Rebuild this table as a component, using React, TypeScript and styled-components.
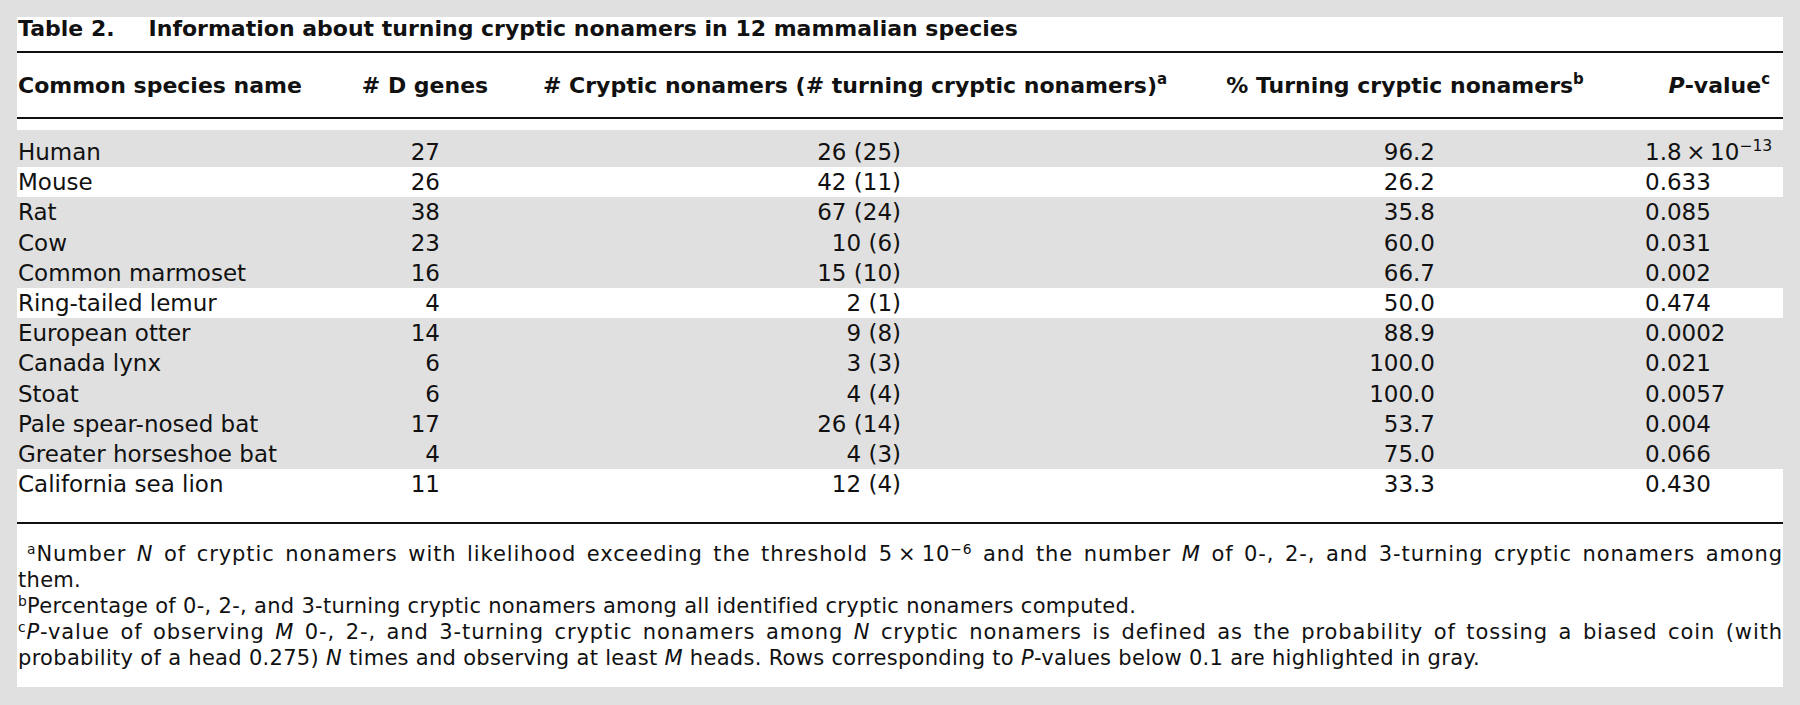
import styled, { createGlobalStyle } from 'styled-components';

const GlobalStyle = createGlobalStyle`
  html, body {
    margin: 0;
    padding: 0;
    background: #e0e0e0;
  }
  body {
    font-family: 'DejaVu Sans', 'Open Sans', sans-serif;
    color: #111;
  }
`;

const Page = styled.div`
  padding: 17px 17px 20px 17px;
`;

const Sheet = styled.div`
  width: 1766px;
  background: #fff;
  padding-bottom: 16px;
`;

const Title = styled.h1`
  margin: 0;
  padding-left: 1px;
  font-size: 22px;
  line-height: 24px;
  font-weight: bold;
  white-space: nowrap;
`;

const TitleLabel = styled.span`
  margin-right: 34px;
`;

const Rule = styled.div<{ $gap?: number }>`
  height: 2px;
  background: #111;
  margin-top: ${(p) => p.$gap ?? 0}px;
`;

const HeaderRow = styled.div`
  display: grid;
  grid-template-columns: 313px 190px 670px 430px 163px;
  height: 64px;
  align-items: center;
  font-size: 22px;
  font-weight: bold;
  white-space: nowrap;
`;

const HeadCell = styled.div<{ $align: 'left' | 'center' | 'right'; $inset?: number }>`
  text-align: ${(p) => p.$align};
  padding-left: ${(p) => (p.$align === 'left' ? 1 : 0)}px;
  padding-right: ${(p) => p.$inset ?? 0}px;
`;

const Body = styled.div`
  padding-top: 11px;
`;

const Row = styled.div<{ $shaded: boolean; $first?: boolean }>`
  display: grid;
  grid-template-columns: 313px 190px 670px 430px 163px;
  height: 30.2px;
  padding-top: ${(p) => (p.$first ? 7 : 0)}px;
  background: ${(p) => (p.$shaded ? '#e0e0e0' : 'transparent')};
  font-size: 23px;
  line-height: 30px;
  white-space: nowrap;
`;

const NameCell = styled.div`
  padding-left: 1px;
`;

const NumCell = styled.div<{ $inset: number }>`
  text-align: right;
  padding-right: ${(p) => p.$inset}px;
`;

const PCell = styled.div`
  padding-left: 25px;
`;

const Sup = styled.sup`
  font-size: 0.68em;
  line-height: 0;
  vertical-align: 0.6em;
  font-weight: inherit;
`;

const Em = styled.i`
  font-style: italic;
`;

const Notes = styled.div`
  margin-top: 17px;
  font-size: 21px;
  line-height: 26px;
  letter-spacing: 0.3px;
`;

const NoteLine = styled.div<{ $justify?: boolean; $indent?: number }>`
  padding-left: ${(p) => p.$indent ?? 1}px;
  text-align: ${(p) => (p.$justify ? 'justify' : 'left')};
  text-align-last: ${(p) => (p.$justify ? 'justify' : 'left')};
  letter-spacing: ${(p) => (p.$justify ? 0.9 : 0.3)}px;
  white-space: ${(p) => (p.$justify ? 'normal' : 'nowrap')};
`;

const NoteMark = styled.sup`
  font-size: 0.66em;
  line-height: 0;
  vertical-align: 0.5em;
`;

type Species = {
  name: string;
  genes: string;
  cryptic: string;
  turning: string;
  p: string;
  shaded: boolean;
};

const species: Species[] = [
  { name: 'Human', genes: '27', cryptic: '26 (25)', turning: '96.2', p: 'exp', shaded: true },
  { name: 'Mouse', genes: '26', cryptic: '42 (11)', turning: '26.2', p: '0.633', shaded: false },
  { name: 'Rat', genes: '38', cryptic: '67 (24)', turning: '35.8', p: '0.085', shaded: true },
  { name: 'Cow', genes: '23', cryptic: '10 (6)', turning: '60.0', p: '0.031', shaded: true },
  { name: 'Common marmoset', genes: '16', cryptic: '15 (10)', turning: '66.7', p: '0.002', shaded: true },
  { name: 'Ring-tailed lemur', genes: '4', cryptic: '2 (1)', turning: '50.0', p: '0.474', shaded: false },
  { name: 'European otter', genes: '14', cryptic: '9 (8)', turning: '88.9', p: '0.0002', shaded: true },
  { name: 'Canada lynx', genes: '6', cryptic: '3 (3)', turning: '100.0', p: '0.021', shaded: true },
  { name: 'Stoat', genes: '6', cryptic: '4 (4)', turning: '100.0', p: '0.0057', shaded: true },
  { name: 'Pale spear-nosed bat', genes: '17', cryptic: '26 (14)', turning: '53.7', p: '0.004', shaded: true },
  { name: 'Greater horseshoe bat', genes: '4', cryptic: '4 (3)', turning: '75.0', p: '0.066', shaded: true },
  { name: 'California sea lion', genes: '11', cryptic: '12 (4)', turning: '33.3', p: '0.430', shaded: false },
];

function PValue({ value }: { value: string }) {
  if (value === 'exp') {
    return (
      <>
        1.8{'\u2009'}×{'\u2009'}10<Sup>−13</Sup>
      </>
    );
  }
  return <>{value}</>;
}

export default function App() {
  return (
    <>
      <GlobalStyle />
      <Page>
        <Sheet>
          <Title>
            <TitleLabel>Table 2.</TitleLabel>Information about turning cryptic nonamers in 12 mammalian species
          </Title>
          <Rule $gap={10} />
          <HeaderRow>
            <HeadCell $align="left">Common species name</HeadCell>
            <HeadCell $align="center"># D genes</HeadCell>
            <HeadCell $align="center">
              # Cryptic nonamers (# turning cryptic nonamers)<Sup>a</Sup>
            </HeadCell>
            <HeadCell $align="center">
              % Turning cryptic nonamers<Sup>b</Sup>
            </HeadCell>
            <HeadCell $align="right" $inset={13}>
              <Em>P</Em>-value<Sup>c</Sup>
            </HeadCell>
          </HeaderRow>
          <Rule />
          <Body>
            {species.map((s, i) => (
              <Row key={s.name} $shaded={s.shaded} $first={i === 0}>
                <NameCell>{s.name}</NameCell>
                <NumCell $inset={80}>{s.genes}</NumCell>
                <NumCell $inset={289}>{s.cryptic}</NumCell>
                <NumCell $inset={185}>{s.turning}</NumCell>
                <PCell>
                  <PValue value={s.p} />
                </PCell>
              </Row>
            ))}
          </Body>
          <Rule $gap={23} />
          <Notes>
            <NoteLine $justify $indent={10}>
              <NoteMark>a</NoteMark>Number <Em>N</Em> of cryptic nonamers with likelihood exceeding the threshold 5{'\u2009'}×{'\u2009'}10
              <NoteMark>−6</NoteMark> and the number <Em>M</Em> of 0-, 2-, and 3-turning cryptic nonamers among
            </NoteLine>
            <NoteLine>them.</NoteLine>
            <NoteLine>
              <NoteMark>b</NoteMark>Percentage of 0-, 2-, and 3-turning cryptic nonamers among all identified cryptic nonamers computed.
            </NoteLine>
            <NoteLine $justify>
              <NoteMark>c</NoteMark>
              <Em>P</Em>-value of observing <Em>M</Em> 0-, 2-, and 3-turning cryptic nonamers among <Em>N</Em> cryptic nonamers is
              defined as the probability of tossing a biased coin (with
            </NoteLine>
            <NoteLine>
              probability of a head 0.275) <Em>N</Em> times and observing at least <Em>M</Em> heads. Rows corresponding to{' '}
              <Em>P</Em>-values below 0.1 are highlighted in gray.
            </NoteLine>
          </Notes>
        </Sheet>
      </Page>
    </>
  );
}
